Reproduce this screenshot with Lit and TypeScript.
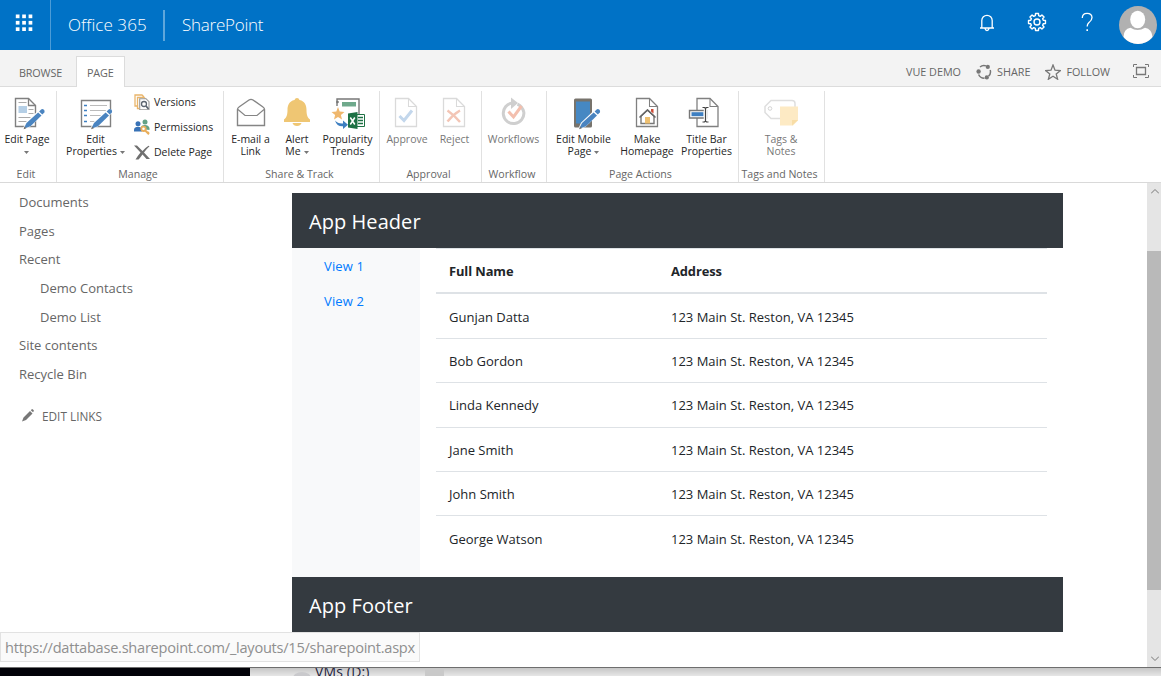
import { LitElement, html, css, svg } from "lit";
import { customElement } from "lit/decorators.js";

const pencil = svg`
  <path d="M28.8 12.2 31.6 15 17 29l-5.4 2.4 2.2-5z" fill="#fff" stroke="#fff" stroke-width="2"/>
  <path d="M25.6 15.4 29 18.6 18 29.2l-4.6 1.9-1.4-1.2 2-4z" fill="#4a84c0"/>
  <path d="M26.6 14.4 28.6 12.4q1.5-1 2.8.4t.4 2.6l-2 2z" fill="#4a84c0"/>
  <path d="m12 29.4-.9 2.8 2.8-1z" fill="#666"/>`;

const page = (x: number, c: string, w = 2) => svg`
  <path d="M${x} 1.500h13l8 8v20h-21z" fill="#fff" stroke="${c}" stroke-width="${w}"/>
  <path d="M${x + 13} 1.500v8h8" fill="none" stroke="${c}" stroke-width="${w * 0.8}"/>`;

const big: Record<string, unknown> = {
  editPage: svg`<g transform="translate(1.500 0)">
    <path d="M3 1.500h13l7 7v21H3z" fill="#fff" stroke="#808080" stroke-width="1.4"/>
    <path d="M16 1.500v7h7" fill="none" stroke="#808080" stroke-width="1.3"/>
    <path d="M6 5.500h8M16 12.500h5M16 16.500h5M6 20.500h12M6 24.500h8" stroke="#aaa" stroke-width="1.2"/>
    <path d="M6 9h8.500v7H6z" fill="#b5cfe6"/></g><g transform="translate(1.500 0)">${pencil}</g>`,
  editProps: svg`
    <path d="M1.500 3.500h29v26h-29z" fill="#fff" stroke="#808080" stroke-width="1.4"/>
    <path d="M4 8.500h3M4 13.500h3M4 18.500h3M4 24.500h3" stroke="#3e7fc1" stroke-width="1.600"/>
    <path d="M10 8.500h17M10 13.500h17M10 18.500h12M10 24.500h6" stroke="#bbb" stroke-width="1.1"/>${pencil}`,
  mail: svg`
    <path d="M2.500 12.500Q2.500 11 4 10L14 3q2-1.300 4 0l10 7q1.500 1 1.500 2.500V28.500h-27z" fill="#fff" stroke="#858585" stroke-width="1.400"/>
    <path d="M3 12.500 10 18.500h12l7-6" fill="none" stroke="#858585" stroke-width="1.200"/>`,
  bell: svg`
    <path d="M13.500 3a2.600 2.600 0 0 1 5 0C24 4.300 25.500 8.500 25.500 13c0 5 1 7.500 3.500 9.500V25H3v-2.500C5.500 20.500 6.500 18 6.500 13c0-4.500 1.500-8.700 7-10z" fill="#efc673"/>
    <path d="M11.500 26h9q-1 3-4.500 3t-4.500-3z" fill="#efc673"/>`,
  trends: svg`
    <path d="M5 9V2h22v16" fill="none" stroke="#777" stroke-width="1.400"/>
    <path d="M10 5h14v4.500H10z" fill="#6fa98c"/><circle cx="5.500" cy="5" r="1.300" fill="#777"/>
    <path d="m6 10 1.700 4.500 4.800.4-3.600 3.100 1.100 4.600L6 20.100l-4 2.500 1.100-4.600L-.500 14.900l4.800-.4z" fill="#efb76d"/>
    <path d="M3 23.500q3 3.500 8 3v-3l5 4.300-5 4.300v-2.800q-6 .5-8-5.800z" fill="#3e7fc1"/>
    <path d="M23 17.500h9.500v12H23z" fill="#fff" stroke="#1e7145"/>
    <path d="M26 20.500h5M26 23.500h5M26 26.500h5" stroke="#1e7145" stroke-width="1.300"/>
    <path d="m16 16.500 9.500-1.500v17L16 30.500z" fill="#1e7145"/>
    <path d="m18.300 20.500 4.500 7m0-7-4.500 7" stroke="#fff" stroke-width="1.500"/>`,
  approve: svg`<g transform="translate(-1 0)">${page(5.5, "#dadada", 1.3)}
    <path d="m9.500 19 4.500 4.500 8-10" fill="none" stroke="#c3d7ec" stroke-width="3"/></g>`,
  reject: svg`<g transform="translate(-1 0)">${page(5.5, "#dadada", 1.3)}
    <path d="M9.500 13.500q7 5 12.500 11.500M22 13.500q-7 4-12.500 11" fill="none" stroke="#f3c5b5" stroke-width="2.400"/></g>`,
  workflow: svg`<g transform="translate(-.500 -1)">
    <path d="M15 7A10.300 10.300 0 1 0 26.300 16" fill="none" stroke="#cfcfcf" stroke-width="3"/>
    <path d="m13.500 1.500 7 5.500-7 6z" fill="#cfcfcf"/><path d="M20 8.200q5 2.300 6.300 8" fill="none" stroke="#cfcfcf" stroke-width="3"/>
    <path d="m11 15.500 5 5.500 8-11" fill="none" stroke="#f3bfae" stroke-width="3"/></g>`,
  mobile: svg`
    <rect x="6" y="1.500" width="18" height="29" rx="1.500" fill="#77736c"/>
    <path d="M8 4.500h14v22H8z" fill="#4688c3"/><path d="M13 28.500h4" stroke="#ddd" stroke-width="1.400"/>
    ${pencil}`,
  home: svg`${page(5.5, "#808080", 1.3)}
    <path d="M10 19v7.500h13V19l-6.500-6z" fill="#fff" stroke="#777" stroke-width="1.400"/>
    <path d="m8.500 20.500 8-7.500 8 7.500" fill="none" stroke="#666" stroke-width="1.600"/>
    <path d="M14 20h5v6.500h-5z" fill="#efc06f"/><path d="M20 12h2.500v4.500l-2.500-2z" fill="#d04a35"/>`,
  titleBar: svg`<g transform="translate(-.500 0)">${page(6.5, "#808080", 1.300)}
    <path d="M-1 13.500h17v7.500H-1z" fill="#fff" stroke="#777" stroke-width="1.400"/>
    <path d="M1 15.200h12v4H1z" fill="#3e7fc1"/>
    <path d="M15 10v16" stroke="#fff" stroke-width="3.500"/>
    <path d="M12 10.500h2l1 1 1-1h2M12 25h2l1-1 1 1h2M15 11v13.500" fill="none" stroke="#444" stroke-width="1.200"/></g>`,
  tags: svg`
    <path d="M6 3.500h21q3 0 3 3v13q0 2-3 2H6l-6-6v-6z" fill="#fff" stroke="#dedede" stroke-width="1.500"/>
    <circle cx="5" cy="11.500" r="1.800" fill="none" stroke="#d5d5d5"/>
    <path d="M15 9.500h18v14l-5 5H15z" fill="#fdeac4"/><path d="M33 23h-6v5.500" fill="#f8dda6"/>`,
};

const small: Record<string, unknown> = {
  versions: svg`
    <path d="M1 10V1h7l2 2M3.500 12.500v-9H10l2 2" fill="none" stroke="#e9b56b" stroke-width="1.300"/>
    <path d="M5.700 4.700h6.300l3 3v8H5.700z" fill="#fff" stroke="#999" stroke-width="1.100"/>
    <circle cx="10" cy="10" r="2.500" fill="#fff" stroke="#5c6570" stroke-width="1.300"/><path d="m12 12 2.500 3" stroke="#5c6570" stroke-width="1.700"/>
    <path d="M1 10v2h2.500v2.500h2" fill="none" stroke="#e9b56b" stroke-width="1.300"/>`,
  permissions: svg`
    <circle cx="11" cy="3" r="2.500" fill="#63a286"/><path d="M7 10V8q.5-2 4-2t4.500 3v2z" fill="#63a286"/>
    <circle cx="4" cy="4.800" r="2.500" fill="#3872b6"/><path d="M0 12.500v-2Q.5 7.800 4 7.800t4 2.700v2z" fill="#3872b6"/>
    <circle cx="9.500" cy="9.800" r="2.200" fill="#fff" stroke="#e9ae5b" stroke-width="1.800"/><path d="m11 11.300 4 4M13.500 14.500l1.300-1.500" stroke="#e9ae5b" stroke-width="2"/>`,
  remove: svg`<path d="M0 1.500h3L8.500 7q3-3.500 6-5.300l1 .6Q12.500 5 10 8.500l6 6.500h-3.500L8.500 10.500Q6 14 4.500 15.500H1.500Q4 11.500 6.500 8.500z" fill="#707070"/>`,
};

@customElement("ribbon-button")
class RibbonButton extends LitElement {
  static properties = { icon: {}, lines: { attribute: false }, arrow: {}, off: { type: Boolean } };
  declare icon: string;
  declare lines: string[];
  declare arrow: string;
  declare off: boolean;

  static styles = css`
    :host { display: block; }
    .btn { display: flex; flex-direction: column; align-items: center; color: #262626; padding-top: 6px; }
    .off { color: #777; }
    svg.icon { width: 32px; height: 32px; overflow: visible; }
    .label { margin-top: 5px; font-size: 10.5px; line-height: 11.5px; white-space: nowrap; text-align: center; }
    .line { height: 11.5px; display: flex; align-items: center; justify-content: center; }
    .arrow { width: 5px; height: 3px; margin-left: 3px; margin-top: 3px; }
    .below { margin: 5px auto 0; display: block; }
  `;

  render() {
    const arrow = (cls: string) =>
      html`<svg class=${cls} viewBox="0 0 5 3"><path d="M0 0h5L2.500 3z" fill="#777"/></svg>`;
    return html`<div class="btn ${this.off ? "off" : ""}">
      <svg class="icon" viewBox="0 0 32 32">${big[this.icon]}</svg>
      <div class="label">
        ${this.lines.map((t, i) => html`<div class="line">${t}${this.arrow === "inline" && i === this.lines.length - 1 ? arrow("arrow") : ""}</div>`)}
        ${this.arrow === "below" ? arrow("arrow below") : ""}
      </div>
    </div>`;
  }
}

type Btn = { w: number; icon: string; lines: string[]; arrow?: string; off?: boolean };
type Group = { name: string; w: number; pad: number; buttons: Btn[]; list?: { icon: string; text: string }[] };

const groups: Group[] = [
  { name: "Edit", w: 57, pad: 0, buttons: [{ w: 54, icon: "editPage", lines: ["Edit Page"], arrow: "below" }] },
  {
    name: "Manage", w: 167, pad: 7,
    buttons: [{ w: 63, icon: "editProps", lines: ["Edit", "Properties"], arrow: "inline" }],
    list: [
      { icon: "versions", text: "Versions" },
      { icon: "permissions", text: "Permissions" },
      { icon: "remove", text: "Delete Page" },
    ],
  },
  {
    name: "Share & Track", w: 156, pad: 3,
    buttons: [
      { w: 47, icon: "mail", lines: ["E-mail a", "Link"] },
      { w: 46, icon: "bell", lines: ["Alert", "Me"], arrow: "inline" },
      { w: 55, icon: "trends", lines: ["Popularity", "Trends"] },
    ],
  },
  {
    name: "Approval", w: 102, pad: 3,
    buttons: [
      { w: 48, icon: "approve", lines: ["Approve"], off: true },
      { w: 47, icon: "reject", lines: ["Reject"], off: true },
    ],
  },
  { name: "Workflow", w: 65, pad: 0, buttons: [{ w: 63, icon: "workflow", lines: ["Workflows"], off: true }] },
  {
    name: "Page Actions", w: 192, pad: 5,
    buttons: [
      { w: 63, icon: "mobile", lines: ["Edit Mobile", "Page"], arrow: "inline" },
      { w: 64, icon: "home", lines: ["Make", "Homepage"] },
      { w: 55, icon: "titleBar", lines: ["Title Bar", "Properties"] },
    ],
  },
  { name: "Tags and Notes", w: 86, pad: 0, buttons: [{ w: 84, icon: "tags", lines: ["Tags &", "Notes"], off: true }] },
];

@customElement("ribbon-bar")
class RibbonBar extends LitElement {
  static styles = css`
    :host { display: flex; height: 95px; border-bottom: 1px solid #d9d9d9; background: #fff; }
    .group { box-sizing: border-box; flex: none; display: flex; flex-direction: column; justify-content: space-between; border-right: 1px solid #e1e1e1; margin-top: 4px; }
    .tools { display: flex; }
    .slot { flex: none; }
    .name { text-align: center; font-size: 10.6px; line-height: 14px; color: #666; white-space: nowrap; padding: 0 4px 1px 0; }
    .list { display: flex; flex-direction: column; margin: -2px 0 0 7px; }
    .item { height: 25px; display: flex; align-items: center; gap: 4px; font-size: 10.5px; letter-spacing: 0; color: #262626; white-space: nowrap; }
    .item svg { width: 16px; height: 16px; }
  `;

  render() {
    return groups.map((g) => html`<div class="group" style="width:${g.w}px">
      <div class="tools" style="padding-left:${g.pad}px">
        ${g.buttons.map((b) => html`<div class="slot" style="width:${b.w}px">
          <ribbon-button .icon=${b.icon} .lines=${b.lines} .arrow=${b.arrow ?? ""} .off=${!!b.off}></ribbon-button>
        </div>`)}
        ${g.list ? html`<div class="list">${g.list.map((l) => html`<div class="item"><svg viewBox="0 0 16 16">${small[l.icon]}</svg>${l.text}</div>`)}</div>` : ""}
      </div>
      <div class="name">${g.name}</div>
    </div>`);
  }
}

const people = ["Gunjan Datta", "Bob Gordon", "Linda Kennedy", "Jane Smith", "John Smith", "George Watson"];

const links = [
  { text: "Documents" }, { text: "Pages" }, { text: "Recent" },
  { text: "Demo Contacts", sub: true }, { text: "Demo List", sub: true },
  { text: "Site contents" }, { text: "Recycle Bin" },
];

const gear = Array.from({ length: 8 }, (_, i) => {
  const p = (r: number, d: number) => {
    const a = ((i * 45 + d) * Math.PI) / 180;
    return `${(10 + r * Math.cos(a)).toFixed(2)} ${(10 + r * Math.sin(a)).toFixed(2)}`;
  };
  return `${i ? "L" : "M"}${p(8.6, -10)}L${p(8.6, 10)}L${p(6.5, 15)}L${p(6.5, 30)}`;
}).join("") + "Z";

@customElement("app-root")
class AppRoot extends LitElement {
  static styles = css`
    :host { display: flex; flex-direction: column; width: 1161px; height: 676px; overflow: hidden; position: relative; background: #fff; font-family: "Open Sans", "Noto Sans", sans-serif; }
    .suite { height: 50px; flex: none; display: flex; align-items: center; background: #0072c6; color: #fff; }
    .waffle { width: 50px; height: 50px; border-right: 1px solid #4c9cd7; display: flex; align-items: center; justify-content: center; }
    .waffle svg { width: 18px; height: 18px; margin: 0 2px 5px 0; }
    .brand { font-size: 17px; font-weight: 300; letter-spacing: 0.07px; padding: 0 0 2px 17px; width: 95px; box-sizing: border-box; white-space: nowrap; }
    .brand.app-name { letter-spacing: -0.25px; }
    .rule { width: 2px; height: 31px; margin-left: 17px; background: #5fa7db; }
    .suite .icons { margin-left: auto; display: flex; align-items: center; height: 46px; padding-bottom: 2px; }
    .icons svg { width: 20px; height: 20px; margin: 0 30px 4px 0; }
    .icons svg.avatar { width: 38px; height: 38px; margin: 1px 4px 0 -8px; }
    .tabs { height: 37px; flex: none; box-sizing: border-box; display: flex; align-items: flex-end; background: #f3f3f3; border-bottom: 1px solid #dcdcdc; font-size: 10.8px; color: #666; }
    .tab { height: 30px; line-height: 34px; width: 76px; padding-left: 19px; box-sizing: border-box; letter-spacing: -0.15px; }
    .tab.on { width: 49px; line-height: 32px; padding: 0 0 0 10px; background: #fff; border: 1px solid #dcdcdc; border-bottom: 0; margin-bottom: -1px; height: 31px; }
    .acts { margin-left: auto; height: 30px; display: flex; align-items: center; }
    .acts span { white-space: nowrap; letter-spacing: 0; padding-top: 1px; }
    .acts svg { width: 16px; height: 16px; }
    .acts svg.share { margin: 2px 5px 0 15px; }
    .acts svg.star { margin: 2px 5px 0 15px; }
    .acts svg.focus { margin: 0 12px 0 23px; }
    .body { height: 484px; flex: none; display: flex; }
    .nav { width: 292px; padding-top: 5px; color: #666; font-size: 13px; }
    .nav .link { height: 28.7px; line-height: 28.7px; padding-left: 19px; }
    .nav .sub { padding-left: 40px; }
    .edit { display: flex; align-items: center; height: 20px; margin-top: 17px; padding-left: 22px; font-size: 11.8px; }
    .edit svg { width: 12px; height: 13px; margin-right: 8px; }
    .app { width: 771px; padding-top: 10px; }
    .bar { height: 55px; line-height: 58px; background: #343a40; color: #fff; font-size: 20px; padding-left: 17px; box-sizing: border-box; letter-spacing: 0.06px; }
    .mid { display: flex; height: 329px; }
    .views { width: 128px; background: #f8f9fa; color: #007bff; font-size: 13px; letter-spacing: 0.15px; }
    .view { padding-left: 32px; height: 35px; line-height: 36px; }
    .table { width: 611px; margin-left: 16px; color: #212529; font-size: 13px; }
    .row { display: grid; grid-template-columns: 222px 1fr; height: 44.3px; align-items: center; box-sizing: border-box; border-top: 1px solid #dee2e6; }
    .row span { padding: 1px 0 0 13px; white-space: nowrap; }
    .row.head { height: 46px; border-bottom: 2px solid #dee2e6; font-weight: 700; font-size: 12.9px; letter-spacing: -0.1px; }
    .row.head span { padding-top: 0; }
    .row.first { border-top-color: transparent; height: 44px; }
    .row:last-child span { padding-top: 2px; }
    .scroll { width: 14px; margin-left: auto; background: #e5e5e5; display: flex; flex-direction: column; justify-content: space-between; align-items: center; }
    .scroll svg { width: 8px; height: 5px; margin: 6px 0 6px 2px; }
    .thumb { width: 14px; height: 339px; background: #b9b9b9; margin-bottom: 10px; }
    .under { height: 8px; border-top: 1px solid #6e6e6e; display: flex; background: linear-gradient(#c6c6c6, #e6e6e6); overflow: hidden; }
    .dark { width: 250px; background: #020208; }
    .disk { width: 18px; height: 12px; border-radius: 50%; background: #c9c9cc; margin: 4px 4px 0 43px; flex: none; }
    .drive { width: 110px; font-size: 14px; line-height: 14px; letter-spacing: 0.15px; color: #1e1e3c; white-space: nowrap; margin-top: -3px; }
    .grip { width: 19px; background: #c9c9c9; }
    .status { position: absolute; left: 0; top: 632px; width: 420px; height: 30px; box-sizing: border-box; border: 1px solid #e2e2e2; background: #fafafa; color: #8f8f8f; font-size: 14.6px; letter-spacing: -0.26px; line-height: 29px; padding-left: 4px; white-space: nowrap; }
  `;

  render() {
    return html`
      <div class="suite">
        <div class="waffle"><svg viewBox="0 0 18 18">${[0, 6.4, 12.8].map((y) => [0, 6.4, 12.8].map((x) => svg`<rect x=${x + 0.8} y=${y + 0.5} width="3.7" height="3.7" fill="#fff"/>`))}</svg></div>
        <div class="brand">Office 365</div><div class="rule"></div><div class="brand app-name">SharePoint</div>
        <div class="icons">
          <svg viewBox="0 0 20 20" fill="none" stroke="#fff" stroke-width="1.300"><path d="M3 16h14M4.800 16V8.500a5.200 5.200 0 0 1 10.400 0V16M8 16.500q.5 2 2 2t2-2"/></svg>
          <svg viewBox="0 0 20 20" fill="none" stroke="#fff" stroke-width="1.400"><path d=${gear} stroke-linejoin="round"/><circle cx="10" cy="10" r="3"/></svg>
          <svg viewBox="0 0 20 20" fill="none" stroke="#fff" stroke-width="1.300"><path d="M5.300 6q0-4.700 4.800-4.700T15 5.500c0 2.500-1.300 3.500-2.800 4.800S10.200 12.500 10.200 14.500"/><path d="M10.200 17.200v1.800" stroke-width="1.600"/></svg>
          <svg class="avatar" viewBox="0 0 38 38"><circle cx="19" cy="19" r="19" fill="#b1b1b1"/><ellipse cx="18.700" cy="13.500" rx="7.500" ry="8.700" fill="#fff"/><path d="M4.500 31q0-8 7-9.300 7 4.500 14.500 0 7 1.300 7.500 9.300A19 19 0 0 1 19 38 19 19 0 0 1 4.500 31z" fill="#fff"/></svg>
        </div>
      </div>
      <div class="tabs">
        <div class="tab">BROWSE</div><div class="tab on">PAGE</div>
        <div class="acts">
          <span>VUE DEMO</span>
          <svg class="share" viewBox="0 0 16 16" fill="none" stroke="#777" stroke-width="1.500"><path d="M4 3A6.200 6.200 0 0 1 10 1.900M14.200 6A6.200 6.200 0 0 1 12.500 12.300M8.500 14.200A6.200 6.200 0 0 1 2.600 10.500"/><g fill="#777" stroke="none"><circle cx="2.600" cy="7.500" r="2.200"/><circle cx="11.800" cy="2.900" r="2.100"/><circle cx="10.800" cy="13.400" r="2.100"/></g></svg>
          <span>SHARE</span>
          <svg class="star" viewBox="0 0 16 16" fill="none" stroke="#777" stroke-width="1.300"><path d="m8 1 2 5.200 5.400.4-4.200 3.400 1.400 5.200L8 12.300l-4.600 2.900L4.800 10 .600 6.600 6 6.200z"/></svg>
          <span>FOLLOW</span>
          <svg class="focus" viewBox="0 0 16 16" fill="none" stroke="#777"><path d="M.500 4V1.500H4M12 1.500h3.500V4M15.500 12v2.500H12M4 14.500H.500V12"/><path d="M3.500 4.500h9v7h-9z" stroke-width="1.300"/></svg>
        </div>
      </div>
      <ribbon-bar></ribbon-bar>
      <div class="body">
        <div class="nav">
          ${links.map((l) => html`<div class="link ${l.sub ? "sub" : ""}">${l.text}</div>`)}
          <div class="edit"><svg viewBox="0 0 12 13"><path d="m0 12.500 1.500-4L8 2l2.500 2.500L4 11zM8.800 1.200 10 0q1 0 2 1.800l-1 1.500z" fill="#777"/></svg>EDIT LINKS</div>
        </div>
        <div class="app">
          <div class="bar">App Header</div>
          <div class="mid">
            <div class="views"><div class="view">View 1</div><div class="view">View 2</div></div>
            <div class="table">
              <div class="row head"><span>Full Name</span><span>Address</span></div>
              ${people.map((p, i) => html`<div class="row ${i ? "" : "first"}"><span>${p}</span><span>123 Main St. Reston, VA 12345</span></div>`)}
            </div>
          </div>
          <div class="bar">App Footer</div>
        </div>
        <div class="scroll">
          <svg viewBox="0 0 8 5"><path d="m0 4.500 4-4 4 4" fill="none" stroke="#777"/></svg>
          <div class="thumb"></div>
          <svg viewBox="0 0 8 5"><path d="m0 .500 4 4 4-4" fill="none" stroke="#777"/></svg>
        </div>
      </div>
      <div class="under"><div class="dark"></div><div class="disk"></div><div class="drive">VMs (D:)</div><div class="grip"></div></div>
      <div class="status">https://dattabase.sharepoint.com/_layouts/15/sharepoint.aspx</div>
    `;
  }
}
